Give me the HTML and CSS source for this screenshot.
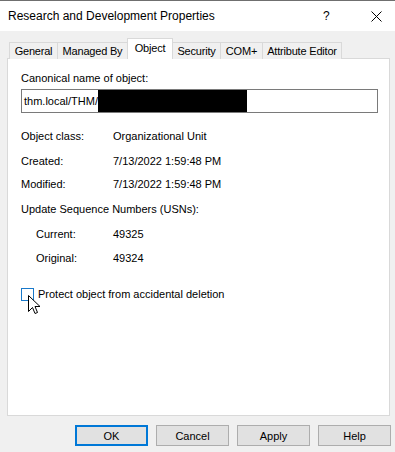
FILE: index.html
```html
<!DOCTYPE html>
<html lang="en">
<head>
    <meta charset="UTF-8">
    <title>Research and Development Properties</title>
    <link rel="stylesheet" href="styles.css">
</head>
<body>
    <div class="dialog">
        <!-- Title bar -->
        <div class="title-bar">
            <span class="title">Research and Development Properties</span>
            <span class="help-glyph">?</span>
            <svg class="close-glyph" width="11" height="11" viewBox="0 0 11 11">
                <path d="M0.5 0.5 L10.5 10.5 M10.5 0.5 L0.5 10.5" stroke="#000" stroke-width="1" fill="none"/>
            </svg>
        </div>

        <div class="body">
            <div class="tabs">
                <div class="tab tab-general">General</div>
                <div class="tab tab-managed">Managed By</div>
                <div class="tab tab-object active">Object</div>
                <div class="tab tab-security">Security</div>
                <div class="tab tab-com">COM+</div>
                <div class="tab tab-attr">Attribute Editor</div>
            </div>

            <div class="panel">
                <div class="field-label">Canonical name of object:</div>
                <div class="text-box">
                    <span>thm.local/THM/</span><span class="redacted"></span>
                </div>

                <div class="info-row row-class">
                    <span class="info-key">Object class:</span>
                    <span>Organizational Unit</span>
                </div>
                <div class="info-row row-created">
                    <span class="info-key">Created:</span>
                    <span>7/13/2022 1:59:48 PM</span>
                </div>
                <div class="info-row row-modified">
                    <span class="info-key">Modified:</span>
                    <span>7/13/2022 1:59:48 PM</span>
                </div>
                <div class="info-row row-usn">Update Sequence Numbers (USNs):</div>
                <div class="info-row sub row-current">
                    <span class="info-key">Current:</span>
                    <span>49325</span>
                </div>
                <div class="info-row sub row-original">
                    <span class="info-key">Original:</span>
                    <span>49324</span>
                </div>

                <div class="check-row">
                    <span class="check-box"></span>
                    <span>Protect object from accidental deletion</span>
                    <!-- mouse pointer hovering the checkbox -->
                    <svg class="cursor" width="13" height="20" viewBox="0 0 13 20">
                        <path d="M0.5 0.5 L0.5 16.5 L4.5 12.5 L7 18.5 L9.5 17.5 L7 11.5 L12 11.5 Z" fill="#fff" stroke="#000" stroke-width="1" stroke-linejoin="miter"/>
                    </svg>
                </div>
            </div>

            <div class="buttons">
                <button class="btn default">OK</button>
                <button class="btn">Cancel</button>
                <button class="btn">Apply</button>
                <button class="btn">Help</button>
            </div>
        </div>
    </div>
</body>
</html>
```
FILE: styles.css
```css
body {
    margin: 0;
    padding: 0;
    font-family: "Liberation Sans", Arial, sans-serif;
    font-size: 11px;
    color: #000;
    background-color: #f0f0f0;
}
.dialog {
    width: 395px;
    height: 452px;
    overflow: hidden;
    background-color: #f0f0f0;
}
/* Title bar */
.title-bar {
    display: flex;
    align-items: center;
    height: 30px;
    background-color: #ffffff;
    border-top: 1px solid #6f6f6f;
    font-size: 12px;
}
.title {
    padding-left: 8px;
    flex: 1;
}
.help-glyph {
    width: 10px;
    margin-right: 38px;
    font-size: 12px;
}
.close-glyph {
    margin-right: 13px;
}
/* Tabs */
.body {
    padding: 7px 0 0 7px;
}
.tabs {
    display: flex;
    align-items: flex-end;
    height: 21px;
    padding-left: 2px;
    margin-bottom: -1px;
    position: relative;
}
.tab {
    height: 17px;
    line-height: 17px;
    text-align: center;
    border: 1px solid #d9d9d9;
    border-bottom: none;
    border-right: none;
    box-sizing: border-box;
    background-color: #f0f0f0;
    font-size: 11px;
    letter-spacing: -0.2px;
    white-space: nowrap;
}
.tab-general { width: 48px; }
.tab-managed { width: 70px; }
.tab-object { width: 46px; }
.tab-security { width: 48px; }
.tab-com { width: 42px; }
.tab-attr { width: 80px; border-right: 1px solid #d9d9d9; }
.tab.active {
    height: 21px;
    line-height: 19px;
    background-color: #ffffff;
    border-right: 1px solid #d9d9d9;
    margin-right: -1px;
    position: relative;
    z-index: 1;
}
/* Panel */
.panel {
    width: 383px;
    height: 358px;
    box-sizing: border-box;
    background-color: #ffffff;
    border: 1px solid #d9d9d9;
    padding: 12px 0 0 13px;
}
.field-label {
    height: 14px;
    line-height: 14px;
}
.text-box {
    display: flex;
    align-items: center;
    width: 357px;
    height: 24px;
    box-sizing: border-box;
    margin-top: 4px;
    border: 1px solid #7a7a7a;
    padding-left: 2px;
}
.redacted {
    display: inline-block;
    width: 149px;
    height: 22px;
    margin-top: -1px;
    background-color: #000;
}
.info-row {
    display: flex;
    height: 14px;
    line-height: 14px;
}
.info-key {
    width: 92px;
}
.info-row.sub {
    padding-left: 15px;
}
.info-row.sub .info-key {
    width: 77px;
}
.row-class { margin-top: 16px; }
.row-created { margin-top: 11px; }
.row-modified { margin-top: 9px; }
.row-usn { margin-top: 11px; }
.row-current { margin-top: 11px; }
.row-original { margin-top: 10px; }
/* Checkbox */
.check-row {
    display: flex;
    align-items: center;
    margin-top: 22px;
    height: 14px;
    position: relative;
}
.check-box {
    width: 13px;
    height: 13px;
    box-sizing: border-box;
    border: 1px solid #1979ca;
    background-color: #fff;
    margin-right: 4px;
}
.cursor {
    position: absolute;
    left: 7px;
    top: 8px;
}
/* Buttons */
.buttons {
    display: flex;
    justify-content: flex-end;
    gap: 8px;
    margin-top: 9px;
    padding-right: 4px;
}
.btn {
    width: 73px;
    height: 21px;
    box-sizing: border-box;
    font-family: "Liberation Sans", Arial, sans-serif;
    font-size: 11px;
    color: #000;
    background-color: #e1e1e1;
    border: 1px solid #adadad;
    padding: 0;
}
.btn.default {
    border: 2px solid #0078d7;
}
```
